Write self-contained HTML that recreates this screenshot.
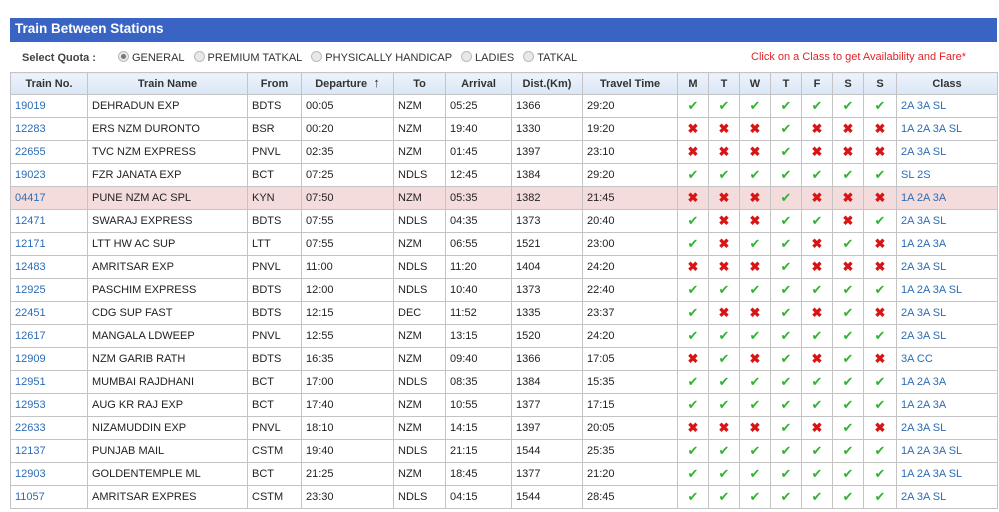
<!DOCTYPE html><html><head><meta charset="utf-8"><style>
body{margin:0;width:999px;height:512px;background:#fff;font-family:"Liberation Sans",Arial,sans-serif;font-size:11px;color:#222;position:relative;overflow:hidden}
.t{position:absolute;left:10px;top:18px;width:987px;height:24px;background:#3a64c3;color:#fff;font-weight:bold;font-size:13.5px;line-height:22px;padding-left:5px;box-sizing:border-box}
.q{position:absolute;top:51px;left:22px;font-size:11px;color:#333}
.q b{font-weight:bold;color:#444;margin-right:22px}
.r{display:inline-block;width:9px;height:9px;border-radius:50%;border:1px solid #bbb;background:#e8e8e8;vertical-align:-1px;margin:0 3px 0 0}
.r.on::after{content:"";display:block;width:5px;height:5px;margin:2px;border-radius:50%;background:#777}
.q span{margin-right:9px;color:#333}
.note{position:absolute;top:51px;left:751px;color:#e0242a;font-size:11px}
table{position:absolute;left:10px;top:72px;border-collapse:collapse;width:987px;table-layout:fixed}
td,th{border:1px solid #c4c4c4;height:22px;padding:0 0 0 4px;white-space:nowrap;overflow:hidden}
th{height:21px;background:linear-gradient(#edf3fb,#d9e6f6);font-weight:bold;color:#333;text-align:center;padding:0}
td.n,td.c{color:#2b6cb5}
td.d{text-align:center;padding:0;font-size:13px}
.y{color:#31b332}.x{color:#d81414;font-weight:bold}
tr.p td{background:#f4dcdc}
</style></head><body>
<div class="t">Train Between Stations</div>
<div class="q"><b>Select Quota :</b><span><i class="r on"></i>GENERAL</span><span><i class="r"></i>PREMIUM TATKAL</span><span><i class="r"></i>PHYSICALLY HANDICAP</span><span><i class="r"></i>LADIES</span><span><i class="r"></i>TATKAL</span></div>
<div class="note">Click on a Class to get Availability and Fare*</div>
<table>
<colgroup><col style="width:77px"><col style="width:160px"><col style="width:54px"><col style="width:92px"><col style="width:52px"><col style="width:66px"><col style="width:71px"><col style="width:95px"><col style="width:31px"><col style="width:31px"><col style="width:31px"><col style="width:31px"><col style="width:31px"><col style="width:31px"><col style="width:33px"><col style="width:101px"></colgroup>
<tr><th>Train No.</th><th>Train Name</th><th>From</th><th>Departure &nbsp;<span style="font-size:13px;line-height:10px">&#8593;</span></th><th>To</th><th>Arrival</th><th>Dist.(Km)</th><th>Travel Time</th><th>M</th><th>T</th><th>W</th><th>T</th><th>F</th><th>S</th><th>S</th><th>Class</th></tr>
<tr><td class="n">19019</td><td>DEHRADUN EXP</td><td>BDTS</td><td>00:05</td><td>NZM</td><td>05:25</td><td>1366</td><td>29:20</td><td class="d y">✔</td><td class="d y">✔</td><td class="d y">✔</td><td class="d y">✔</td><td class="d y">✔</td><td class="d y">✔</td><td class="d y">✔</td><td class="c">2A 3A SL</td></tr>
<tr><td class="n">12283</td><td>ERS NZM DURONTO</td><td>BSR</td><td>00:20</td><td>NZM</td><td>19:40</td><td>1330</td><td>19:20</td><td class="d x">✖</td><td class="d x">✖</td><td class="d x">✖</td><td class="d y">✔</td><td class="d x">✖</td><td class="d x">✖</td><td class="d x">✖</td><td class="c">1A 2A 3A SL</td></tr>
<tr><td class="n">22655</td><td>TVC NZM EXPRESS</td><td>PNVL</td><td>02:35</td><td>NZM</td><td>01:45</td><td>1397</td><td>23:10</td><td class="d x">✖</td><td class="d x">✖</td><td class="d x">✖</td><td class="d y">✔</td><td class="d x">✖</td><td class="d x">✖</td><td class="d x">✖</td><td class="c">2A 3A SL</td></tr>
<tr><td class="n">19023</td><td>FZR JANATA EXP</td><td>BCT</td><td>07:25</td><td>NDLS</td><td>12:45</td><td>1384</td><td>29:20</td><td class="d y">✔</td><td class="d y">✔</td><td class="d y">✔</td><td class="d y">✔</td><td class="d y">✔</td><td class="d y">✔</td><td class="d y">✔</td><td class="c">SL 2S</td></tr>
<tr class="p"><td class="n">04417</td><td>PUNE NZM AC SPL</td><td>KYN</td><td>07:50</td><td>NZM</td><td>05:35</td><td>1382</td><td>21:45</td><td class="d x">✖</td><td class="d x">✖</td><td class="d x">✖</td><td class="d y">✔</td><td class="d x">✖</td><td class="d x">✖</td><td class="d x">✖</td><td class="c">1A 2A 3A</td></tr>
<tr><td class="n">12471</td><td>SWARAJ EXPRESS</td><td>BDTS</td><td>07:55</td><td>NDLS</td><td>04:35</td><td>1373</td><td>20:40</td><td class="d y">✔</td><td class="d x">✖</td><td class="d x">✖</td><td class="d y">✔</td><td class="d y">✔</td><td class="d x">✖</td><td class="d y">✔</td><td class="c">2A 3A SL</td></tr>
<tr><td class="n">12171</td><td>LTT HW AC SUP</td><td>LTT</td><td>07:55</td><td>NZM</td><td>06:55</td><td>1521</td><td>23:00</td><td class="d y">✔</td><td class="d x">✖</td><td class="d y">✔</td><td class="d y">✔</td><td class="d x">✖</td><td class="d y">✔</td><td class="d x">✖</td><td class="c">1A 2A 3A</td></tr>
<tr><td class="n">12483</td><td>AMRITSAR EXP</td><td>PNVL</td><td>11:00</td><td>NDLS</td><td>11:20</td><td>1404</td><td>24:20</td><td class="d x">✖</td><td class="d x">✖</td><td class="d x">✖</td><td class="d y">✔</td><td class="d x">✖</td><td class="d x">✖</td><td class="d x">✖</td><td class="c">2A 3A SL</td></tr>
<tr><td class="n">12925</td><td>PASCHIM EXPRESS</td><td>BDTS</td><td>12:00</td><td>NDLS</td><td>10:40</td><td>1373</td><td>22:40</td><td class="d y">✔</td><td class="d y">✔</td><td class="d y">✔</td><td class="d y">✔</td><td class="d y">✔</td><td class="d y">✔</td><td class="d y">✔</td><td class="c">1A 2A 3A SL</td></tr>
<tr><td class="n">22451</td><td>CDG SUP FAST</td><td>BDTS</td><td>12:15</td><td>DEC</td><td>11:52</td><td>1335</td><td>23:37</td><td class="d y">✔</td><td class="d x">✖</td><td class="d x">✖</td><td class="d y">✔</td><td class="d x">✖</td><td class="d y">✔</td><td class="d x">✖</td><td class="c">2A 3A SL</td></tr>
<tr><td class="n">12617</td><td>MANGALA LDWEEP</td><td>PNVL</td><td>12:55</td><td>NZM</td><td>13:15</td><td>1520</td><td>24:20</td><td class="d y">✔</td><td class="d y">✔</td><td class="d y">✔</td><td class="d y">✔</td><td class="d y">✔</td><td class="d y">✔</td><td class="d y">✔</td><td class="c">2A 3A SL</td></tr>
<tr><td class="n">12909</td><td>NZM GARIB RATH</td><td>BDTS</td><td>16:35</td><td>NZM</td><td>09:40</td><td>1366</td><td>17:05</td><td class="d x">✖</td><td class="d y">✔</td><td class="d x">✖</td><td class="d y">✔</td><td class="d x">✖</td><td class="d y">✔</td><td class="d x">✖</td><td class="c">3A CC</td></tr>
<tr><td class="n">12951</td><td>MUMBAI RAJDHANI</td><td>BCT</td><td>17:00</td><td>NDLS</td><td>08:35</td><td>1384</td><td>15:35</td><td class="d y">✔</td><td class="d y">✔</td><td class="d y">✔</td><td class="d y">✔</td><td class="d y">✔</td><td class="d y">✔</td><td class="d y">✔</td><td class="c">1A 2A 3A</td></tr>
<tr><td class="n">12953</td><td>AUG KR RAJ EXP</td><td>BCT</td><td>17:40</td><td>NZM</td><td>10:55</td><td>1377</td><td>17:15</td><td class="d y">✔</td><td class="d y">✔</td><td class="d y">✔</td><td class="d y">✔</td><td class="d y">✔</td><td class="d y">✔</td><td class="d y">✔</td><td class="c">1A 2A 3A</td></tr>
<tr><td class="n">22633</td><td>NIZAMUDDIN EXP</td><td>PNVL</td><td>18:10</td><td>NZM</td><td>14:15</td><td>1397</td><td>20:05</td><td class="d x">✖</td><td class="d x">✖</td><td class="d x">✖</td><td class="d y">✔</td><td class="d x">✖</td><td class="d y">✔</td><td class="d x">✖</td><td class="c">2A 3A SL</td></tr>
<tr><td class="n">12137</td><td>PUNJAB MAIL</td><td>CSTM</td><td>19:40</td><td>NDLS</td><td>21:15</td><td>1544</td><td>25:35</td><td class="d y">✔</td><td class="d y">✔</td><td class="d y">✔</td><td class="d y">✔</td><td class="d y">✔</td><td class="d y">✔</td><td class="d y">✔</td><td class="c">1A 2A 3A SL</td></tr>
<tr><td class="n">12903</td><td>GOLDENTEMPLE ML</td><td>BCT</td><td>21:25</td><td>NZM</td><td>18:45</td><td>1377</td><td>21:20</td><td class="d y">✔</td><td class="d y">✔</td><td class="d y">✔</td><td class="d y">✔</td><td class="d y">✔</td><td class="d y">✔</td><td class="d y">✔</td><td class="c">1A 2A 3A SL</td></tr>
<tr><td class="n">11057</td><td>AMRITSAR EXPRES</td><td>CSTM</td><td>23:30</td><td>NDLS</td><td>04:15</td><td>1544</td><td>28:45</td><td class="d y">✔</td><td class="d y">✔</td><td class="d y">✔</td><td class="d y">✔</td><td class="d y">✔</td><td class="d y">✔</td><td class="d y">✔</td><td class="c">2A 3A SL</td></tr>
</table>
</body></html>
